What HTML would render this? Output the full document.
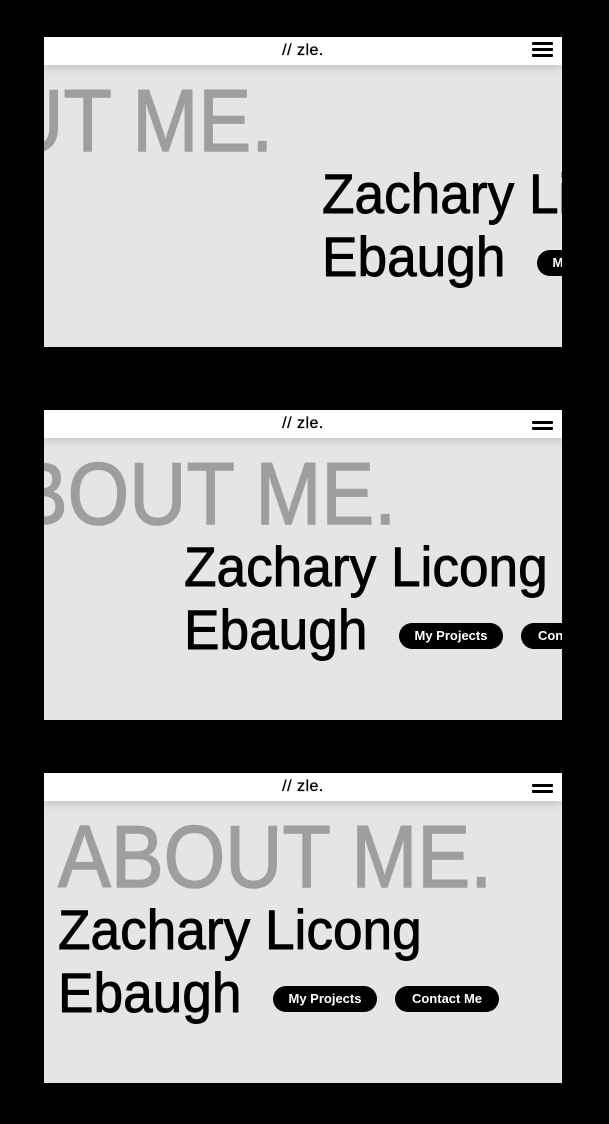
<!DOCTYPE html>
<html><head><meta charset="utf-8"><style>
body{margin:0;background:#000;width:609px;height:1124px;position:relative;overflow:hidden;font-family:"Liberation Sans",sans-serif}
.f{position:absolute;left:44px;width:518px;height:310px;background:#e5e5e5;overflow:hidden}
.hd{position:absolute;left:0;top:0;width:518px;height:28px;background:#fff;box-shadow:0 3px 8px rgba(0,0,0,.15);z-index:2}
.hd .t{position:absolute;left:0;width:518px;text-align:center;top:5px;font-size:16px;color:#000;-webkit-text-stroke:.3px #000;letter-spacing:.5px}
.hb{position:absolute;right:9px;width:21px}
.hb i{display:block;height:3px;background:#000;margin-bottom:3px;border-radius:1px}
.ab{position:absolute;top:34px;font-size:88px;color:#9e9e9e;white-space:nowrap;transform-origin:0 0;transform:scaleX(.9);line-height:100px;-webkit-text-stroke:1.5px #9e9e9e}
.nm{position:absolute;font-size:56px;color:#000;white-space:nowrap;transform-origin:0 0;transform:scaleX(.95);line-height:63px;top:125px;-webkit-text-stroke:.9px #000}
.bt{position:absolute;top:213px;height:26px;width:104px;border-radius:13px;background:#000;color:#fff;font-size:13px;font-weight:bold;text-align:center;line-height:26px;white-space:nowrap}
</style></head><body>

<div class="f" style="top:37px">
 <div class="hd"><div class="t">// zle.</div><div class="hb" style="top:5px"><i></i><i></i><i></i></div></div>
 <div class="ab" style="left:-205px">ABOUT ME.</div>
 <div class="nm" style="left:278px">Zachary Licong<br>Ebaugh</div>
 <div class="bt" style="left:493px">My Projects</div>
</div>

<div class="f" style="top:410px">
 <div class="hd"><div class="t">// zle.</div><div class="hb" style="top:11px"><i></i><i></i></div></div>
 <div class="ab" style="left:-82px">ABOUT ME.</div>
 <div class="nm" style="left:140px">Zachary Licong<br>Ebaugh</div>
 <div class="bt" style="left:355px">My Projects</div>
 <div class="bt" style="left:477px">Contact Me</div>
</div>

<div class="f" style="top:773px">
 <div class="hd"><div class="t">// zle.</div><div class="hb" style="top:11px"><i></i><i></i></div></div>
 <div class="ab" style="left:14px">ABOUT ME.</div>
 <div class="nm" style="left:14px">Zachary Licong<br>Ebaugh</div>
 <div class="bt" style="left:229px">My Projects</div>
 <div class="bt" style="left:351px">Contact Me</div>
</div>

</body></html>
